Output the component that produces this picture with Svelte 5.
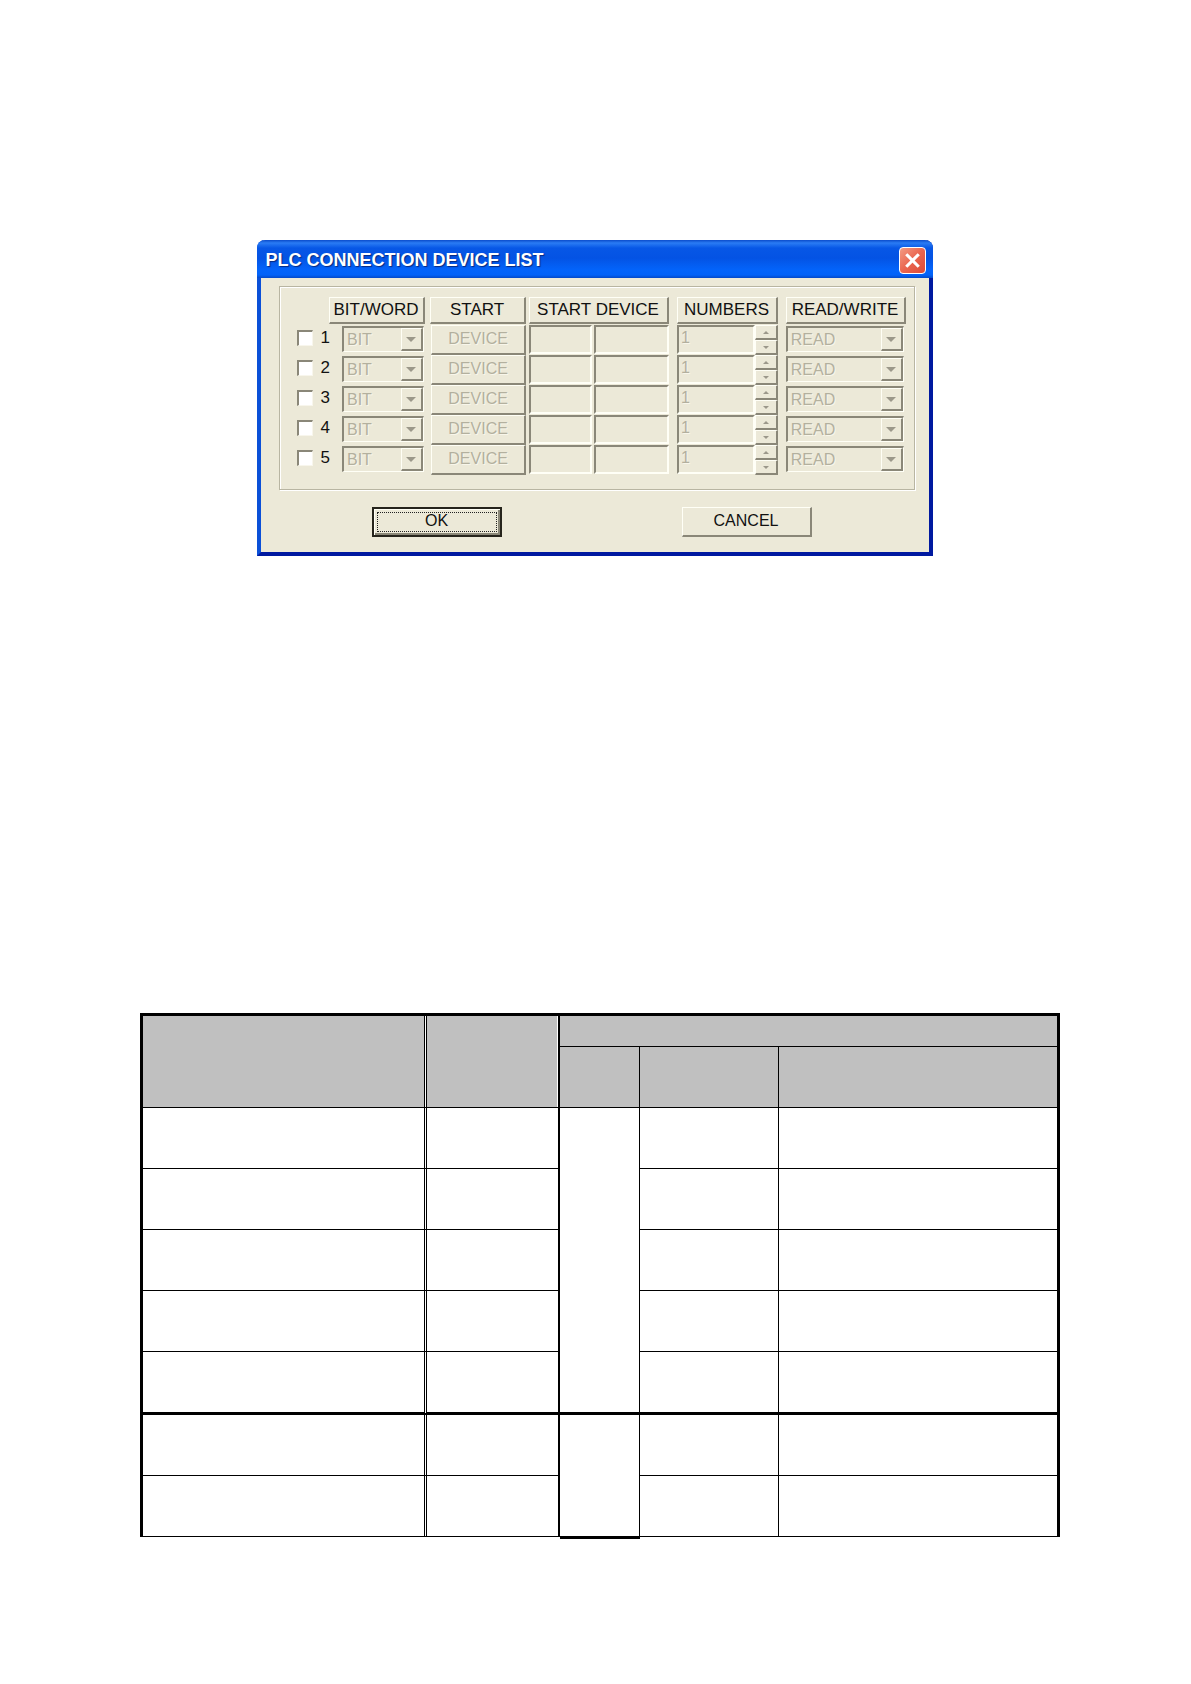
<script lang="ts">
  let devices = $state(
    [1, 2, 3, 4, 5].map((id) => ({
      id,
      enabled: false,
      type: "BIT",
      prefix: "",
      address: "",
      count: "1",
      access: "READ",
    }))
  );

  const headings = ["BIT/WORD", "START", "START DEVICE", "NUMBERS", "READ/WRITE"];
  const groups = [5, 2];
</script>

{#snippet arrow(up: boolean, size: number)}
  <svg class="arrow" width={size} height={size / 2} viewBox="0 0 10 5" aria-hidden="true">
    <path d={up ? "M0 5 5 0 10 5Z" : "M0 0H10L5 5Z"} />
  </svg>
{/snippet}

<main class="page">
  <section class="dialog" aria-labelledby="dialog-title">
    <header class="title-bar">
      <h1 id="dialog-title">PLC CONNECTION DEVICE LIST</h1>
      <button class="close" type="button" aria-label="Close">
        <svg viewBox="0 0 24 24" aria-hidden="true">
          <path d="M6 6 18 18M18 6 6 18" />
        </svg>
      </button>
    </header>

    <div class="group">
      <div class="row head">
        <span></span>
        {#each headings as heading}
          <div class="cell"><span class="heading">{heading}</span></div>
        {/each}
      </div>
      {#each devices as device}
        <div class="row">
          <label class="check">
            <input type="checkbox" bind:checked={device.enabled} />
            <span>{device.id}</span>
          </label>
          <div class="cell combo-cell">
            <div class="combo">
              <select
                bind:value={device.type}
                disabled={!device.enabled}
                aria-label="Bit or word {device.id}"
              >
                <option>BIT</option>
                <option>WORD</option>
              </select>
              <span class="drop">{@render arrow(false, 10)}</span>
            </div>
          </div>
          <div class="cell">
            <button class="device" type="button" disabled={!device.enabled}>DEVICE</button>
          </div>
          <div class="cell fields">
            <input
              class="sunken"
              type="text"
              bind:value={device.prefix}
              disabled={!device.enabled}
              aria-label="Start device name {device.id}"
            />
            <input
              class="sunken"
              type="text"
              bind:value={device.address}
              disabled={!device.enabled}
              aria-label="Start device address {device.id}"
            />
          </div>
          <div class="cell spinner">
            <input
              class="sunken"
              type="text"
              bind:value={device.count}
              disabled={!device.enabled}
              aria-label="Numbers {device.id}"
            />
            <div class="steps">
              <button type="button" disabled={!device.enabled} aria-label="Increase {device.id}">
                {@render arrow(true, 6)}
              </button>
              <button type="button" disabled={!device.enabled} aria-label="Decrease {device.id}">
                {@render arrow(false, 6)}
              </button>
            </div>
          </div>
          <div class="cell combo-cell">
            <div class="combo">
              <select
                bind:value={device.access}
                disabled={!device.enabled}
                aria-label="Read or write {device.id}"
              >
                <option>READ</option>
                <option>WRITE</option>
              </select>
              <span class="drop">{@render arrow(false, 10)}</span>
            </div>
          </div>
        </div>
      {/each}
    </div>

    <footer class="actions">
      <button class="ok" type="button"><span>OK</span></button>
      <button class="cancel" type="button">CANCEL</button>
    </footer>
  </section>

  <div class="sheet">
    <table>
      <colgroup>
        <col class="col-name" />
        <col class="col-mark" />
        <col class="col-type" />
        <col class="col-start" />
        <col />
      </colgroup>
      <thead>
        <tr class="short">
          <th class="name" rowspan="2"></th>
          <th class="mark" rowspan="2"></th>
          <th colspan="3"></th>
        </tr>
        <tr>
          <th class="line"></th>
          <th class="line"></th>
          <th></th>
        </tr>
      </thead>
      {#each groups as count}
        <tbody>
          {#each { length: count } as _, i}
            <tr>
              <td class="name"></td>
              <td class="mark"></td>
              {#if i === 0}
                <td class="line span" rowspan={count}></td>
              {/if}
              <td class="line"></td>
              <td></td>
            </tr>
          {/each}
        </tbody>
      {/each}
    </table>
  </div>
</main>

<style>
  :global(body) {
    margin: 0;
    background: #fff;
  }

  .page {
    --face: #ece9d8;
    --light: #fffff6;
    --shade: #8a8778;
    --muted: #b3b09e;
    padding: 240px 2px 145px 0;
    font-family: "Liberation Sans", Arial, sans-serif;
    font-size: 16px;
    color: #111;
  }

  button,
  input,
  select {
    box-sizing: border-box;
    margin: 0;
    padding: 0;
    border: 0;
    border-radius: 0;
    font: inherit;
    color: inherit;
    background: var(--face);
  }

  .dialog {
    box-sizing: border-box;
    max-width: 676px;
    margin: 0 auto;
    border: 4px solid #0b50d8;
    border-top: 0;
    border-right-color: #0019a0;
    border-bottom-color: #0019a0;
    border-radius: 8px 8px 0 0;
    background: var(--face);
  }

  .title-bar {
    display: flex;
    align-items: center;
    justify-content: space-between;
    height: 38px;
    margin: 0 -4px;
    padding: 1px 7px 0 9px;
    box-sizing: border-box;
    border-radius: 8px 8px 0 0;
    background: linear-gradient(
      #0a4bcb 0,
      #2a7cf4 3px,
      #0757e6 8px,
      #0453e4 18px,
      #0364fb 30px,
      #0262f8 35px,
      #0449c8 38px
    );
  }

  h1 {
    margin: 0;
    font-size: 18px;
    font-weight: 700;
    line-height: 24px;
    color: #fff;
    text-shadow: 1px 1px 1px #062a80;
    white-space: nowrap;
  }

  .close {
    flex: none;
    width: 27px;
    height: 27px;
    margin-top: 2px;
    border: 1px solid #fff;
    border-radius: 4px;
    background: linear-gradient(135deg, #f39b84, #ea6650 50%, #dc4a38);
  }

  .close svg {
    display: block;
    width: 25px;
    height: 25px;
  }

  .close path {
    fill: none;
    stroke: #fff;
    stroke-width: 3;
  }

  .group {
    margin: 8px 14px 0 18px;
    padding: 10px 8px 14px 17px;
    border: 1px solid #b8b5a2;
    box-shadow:
      1px 1px 0 #fff,
      inset 1px 1px 0 #fff;
  }

  .row {
    display: grid;
    grid-template-columns: 32fr 101fr 99fr 148fr 109fr 120fr;
    height: 30px;
  }

  .row.head {
    height: 28px;
  }

  .cell {
    min-width: 0;
    display: flex;
    align-items: flex-start;
  }

  .cell:nth-child(2) {
    padding-right: 5px;
  }

  .cell:nth-child(3) {
    padding-right: 3px;
  }

  .cell:nth-child(4),
  .cell:nth-child(5) {
    padding-right: 8px;
  }

  .heading,
  .device,
  .cancel {
    border: 1px solid var(--light);
    border-right: 2px solid var(--shade);
    border-bottom: 2px solid var(--shade);
  }

  .heading {
    flex: 1;
    height: 24px;
    font-size: 17px;
    line-height: 24px;
    text-align: center;
    white-space: nowrap;
  }

  .device {
    flex: 1;
    height: 30px;
    padding-bottom: 2px;
  }

  .device,
  .sunken,
  select {
    color: var(--muted);
    opacity: 1;
    text-shadow: 1px 1px 0 #f8f6ea;
  }

  .check {
    display: flex;
    align-items: center;
    gap: 8px;
    height: 26px;
    font-size: 17px;
    white-space: nowrap;
  }

  .check input {
    appearance: none;
    flex: none;
    width: 16px;
    height: 16px;
    border: 2px solid var(--shade);
    border-right: 1px solid #f8f6ec;
    border-bottom: 1px solid #f8f6ec;
    background: #fff;
  }

  .check input:checked {
    background: #444;
  }

  .row .combo-cell {
    padding: 1px 2px 0 0;
  }

  .row .combo-cell:nth-child(2) {
    padding: 1px 7px 0 12px;
  }

  .combo {
    position: relative;
    flex: 1;
    min-width: 0;
  }

  .combo select {
    appearance: none;
    display: block;
    width: 100%;
    height: 26px;
    padding-left: 3px;
    border: 2px solid var(--shade);
    border-bottom: 1px solid var(--light);
    border-right: 1px solid var(--light);
  }

  .drop {
    position: absolute;
    top: 2px;
    right: 1px;
    bottom: 1px;
    display: grid;
    place-items: center;
    width: 22px;
    box-sizing: border-box;
    border: 1px solid var(--light);
    border-right: 2px solid var(--shade);
    border-bottom: 2px solid var(--shade);
    background: var(--face);
    pointer-events: none;
  }

  .arrow {
    display: block;
    fill: #9b988a;
  }

  .sunken {
    min-width: 0;
    height: 29px;
    padding: 0 0 4px 2px;
    border: 2px solid var(--shade);
    border-right-color: var(--light);
    border-bottom-color: var(--light);
  }

  .fields {
    display: grid;
    grid-template-columns: 63fr 75fr;
    gap: 2px;
  }

  .spinner .sunken {
    flex: 1;
  }

  .steps {
    display: flex;
    flex-direction: column;
    flex: none;
    width: 23px;
  }

  .steps button {
    display: grid;
    place-items: center;
    height: 15px;
    border: 1px solid var(--light);
    border-right: 2px solid var(--shade);
    border-bottom: 2px solid var(--shade);
  }

  .actions {
    display: flex;
    justify-content: space-between;
    margin: 17px 117px 15px 111px;
  }

  .actions button {
    width: 130px;
    height: 30px;
  }

  .ok {
    border: 2px solid #26241c;
    box-shadow:
      inset 1px 1px 0 var(--light),
      inset -2px -2px 0 var(--shade);
  }

  .ok span {
    display: block;
    height: 18px;
    margin: 0 3px;
    line-height: 16px;
    border: 1px dotted #222;
  }

  .cancel {
    padding-bottom: 2px;
  }

  .sheet {
    margin: 457px 129px 0 140px;
  }

  table {
    width: 100%;
    table-layout: fixed;
    border-collapse: separate;
    border-spacing: 0;
    border: 3px solid #000;
    border-bottom: 0;
  }

  .col-name {
    width: 284px;
  }

  .col-mark {
    width: 133px;
  }

  .col-type {
    width: 80px;
  }

  .col-start {
    width: 139px;
  }

  tr {
    height: 61px;
  }

  tr.short {
    height: 31px;
  }

  th,
  td {
    padding: 0;
    border-bottom: 1px solid #000;
    background-clip: padding-box;
  }

  th {
    background-color: #c0c0c0;
  }

  .name {
    border-right: 3px double #000;
  }

  .mark {
    border-right: 2px solid #000;
  }

  th.mark {
    box-shadow: inset -1px 0 0 #fff;
  }

  .line {
    border-right: 1px solid #000;
  }

  tbody:not(:last-child) tr:last-child {
    height: 63px;
  }

  tbody:not(:last-child) tr:last-child td,
  tbody:not(:last-child) .span {
    border-bottom-width: 3px;
  }

  tbody:last-child .span {
    box-shadow: 0 2px 0 #000;
  }
</style>
